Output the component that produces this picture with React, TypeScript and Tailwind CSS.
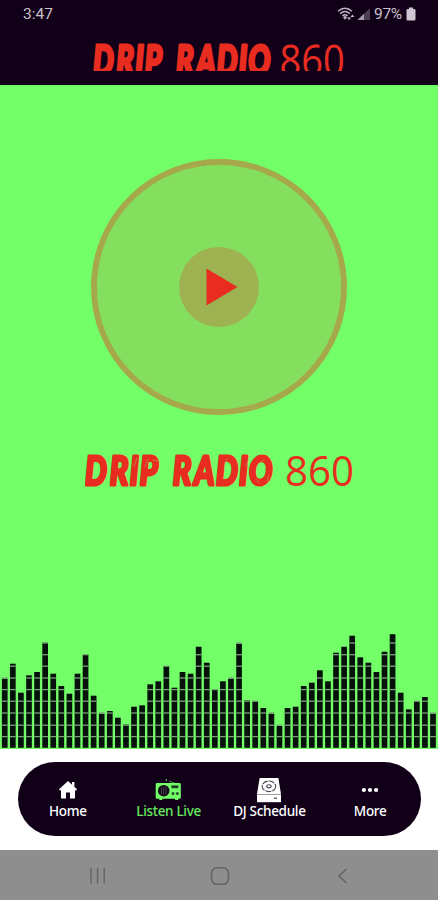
import React from "react";

const barTops = [
  678.7, 663.7, 692.7, 675.3, 672, 642.7, 673.7, 686, 693.7, 673.7, 655, 695.7, 713.7, 711, 717.7, 724.5, 706.7, 705.3,
  684.3, 681.3, 666, 687.7, 672, 673.7, 646.7, 662.7, 690, 681.3, 678.7, 643.7, 700.3, 701.3, 708, 713.7, 726, 708,
  706.7, 686, 682.7, 670.3, 681.3, 652.7, 646.7, 635.7, 657.3, 662.7, 672, 651.7, 634.2, 692.7, 709.3, 701.3, 697, 713.7,
];
const gridLines = [643, 654.7, 666.2, 678, 689.6, 701.2, 713, 725.2, 736.6];

function Wordmark({ clipped = false }: { clipped?: boolean }) {
  return (
    <svg
      viewBox={clipped ? "0 0 268 30" : "0 0 268 36"}
      className={clipped ? "block h-[28.4px] w-[253px]" : "block h-[36px] w-[268px]"}
      preserveAspectRatio="xMinYMin slice"
      fill="#e82c20"
    >
      <g transform={clipped ? "translate(0 -1.4) scale(1 1.1)" : undefined}>
        <text
          transform="translate(0 32.4) scale(0.77 1)"
          y="0"
          fontFamily="Lato, sans-serif"
          fontWeight="900"
          fontStyle="italic"
          fontSize="40"
          stroke="#e82c20"
          strokeWidth="3"
          strokeLinejoin="round"
          strokeLinecap="round"
        >
          <tspan x="0 32 58 71">DRIP</tspan> <tspan x="114 142 170 200 213">RADIO</tspan>
        </text>
        <text
          x={clipped ? "197" : "200"}
          y="33"
          fontFamily="'Open Sans', 'Noto Sans', sans-serif"
          fontWeight="400"
          fontSize="41.5"
          textLength="69"
          lengthAdjust="spacingAndGlyphs"
        >
          860
        </text>
      </g>
      {!clipped && (
        <g stroke="#8ade5f" strokeWidth="0.7" opacity="0.65" fill="none" strokeLinecap="round">
          <path d="M49 13l3-8M60 14l3-8M68 7l5 1M127 13l3-7M139 15l3-9M161 13l3-8M174 10l5-3M171 26l3 4M184 22l-2 6" />
        </g>
      )}
    </svg>
  );
}

function StatusBar() {
  return (
    <div className="flex h-[28px] items-center justify-between pr-[22px] pl-[23px] font-['Roboto',sans-serif] text-[15.5px] text-[#c9c1cc]">
      <span className="w-[31px] pt-px">3:47</span>
      <div className="flex items-center">
        <svg width="37" height="16" viewBox="0 0 37 16">
          <g fill="none" stroke="#bdb5c1" strokeWidth="1.5">
            <path d="M1 5.2Q8 -0.8 15 5.2M3.2 7.6Q8 3.5 12.8 7.6M5.4 9.9Q8 7.8 10.6 9.9" />
          </g>
          <path d="M6 11.2L8 9.8L10 11.2L8 13.8Z" fill="#bdb5c1" />
          <path d="M10 11.4L12 14L14 11.4ZM13.5 11L15.4 8.5L17.3 11Z" fill="#c9c1cc" />
          <path d="M20.5 14L33 2.2V14Z" fill="#4b4051" />
          <path d="M20.5 14L27 7.8V14Z" fill="#a69cac" />
        </svg>
        <span className="w-[32px] pt-px text-[15.5px] tracking-[-0.3px]">97%</span>
        <svg width="10" height="15" viewBox="0 0 10 15" fill="#d0c6d3">
          <path d="M3 0.5h4v1.5h1.2a1.3 1.3 0 0 1 1.3 1.3v8.9a1.3 1.3 0 0 1-1.3 1.3H1.8a1.3 1.3 0 0 1-1.3-1.3V3.3a1.3 1.3 0 0 1 1.3-1.3H3z" />
        </svg>
      </div>
    </div>
  );
}

function Equalizer() {
  return (
    <svg className="block h-[120px] w-full" viewBox="0 630 438 120" preserveAspectRatio="none">
      {barTops.map((top, i) => (
        <rect key={i} x={1.9 + i * 8.08} y={top} width="5.7" height={747.8 - top} fill="#07110c" />
      ))}
      {barTops.map((top, i) =>
        gridLines
          .filter((y) => y > top - 1)
          .map((y) => <rect key={`${i}-${y}`} x={1.9 + i * 8.08} y={y - 0.65} width="5.7" height="1.3" fill="#77a377" />)
      )}
    </svg>
  );
}

const HomeIcon = () => (
  <svg width="20" height="20" viewBox="0 0 20 20" fill="#fff">
    <path d="M10 1L19 9.3L17.9 10.8L17 10V18.5H12V12.5H8V18.5H3V10L2.1 10.8L1 9.3Z" />
    <path d="M14 2h2.4v5L14 5z" />
  </svg>
);

const RadioIcon = () => (
  <svg width="27" height="24" viewBox="0 0 27 24">
    <path d="M14 3L20 5.4" stroke="#4d9f4c" strokeWidth="0.9" />
    <circle cx="11.3" cy="2.1" r="0.8" fill="#72ff68" />
    <path d="M2 5h22.5q1.3 0 1.3 1.3v13.2q0 1.3-1.3 1.3h-1.3v1.1h-3v-1.1H7.3v1.1h-3v-1.1H2q-1.3 0-1.3-1.3V6.3Q.7 5 2 5z" fill="#72ff68" />
    <circle cx="8.7" cy="12.7" r="5.8" fill="#160a1b" />
    <path d="M6.5 9v7M8.7 8.5v8.4M10.9 9v7" stroke="#49444d" strokeWidth="0.9" />
    <path d="M16.4 7.4h7v2.8h-7z" fill="#1c3d22" />
    <circle cx="18" cy="15.6" r="1.5" fill="#235228" />
    <circle cx="22.3" cy="15.6" r="1.5" fill="#235228" />
  </svg>
);

const DriveIcon = () => (
  <svg width="26" height="26" viewBox="0 0 26 26">
    <path d="M3.6 1H22.4L25 17.3H1Z" fill="#fff" />
    <path d="M1 17.3h24v7.9H1z" fill="#fff" />
    <g fill="none" stroke="#4d4852" strokeWidth="1.1">
      <ellipse cx="12.9" cy="9.3" rx="6.8" ry="5.3" strokeDasharray="6 1" />
      <ellipse cx="12.9" cy="9.3" rx="2.2" ry="1.6" />
    </g>
    <path d="M1 17.5h24" stroke="#8d8792" strokeWidth="0.7" />
    <path d="M18 21.2h3" stroke="#4d4554" strokeWidth="1.2" />
  </svg>
);

const MoreIcon = () => (
  <svg width="18" height="8" viewBox="0 0 18 8" fill="#fff">
    <circle cx="2.9" cy="4" r="2.1" />
    <circle cx="9" cy="4" r="2.1" />
    <circle cx="15.1" cy="4" r="2.1" />
  </svg>
);

function Tab({ icon, label, active }: { icon: React.ReactNode; label: string; active?: boolean }) {
  return (
    <div className={`flex w-[101px] flex-col items-center ${active ? "text-[#67e85f]" : "text-white"}`}>
      <div className="flex h-[29px] items-center justify-center">{icon}</div>
      <span className="text-[13.5px] leading-[15px] font-medium tracking-[-0.3px] whitespace-nowrap">{label}</span>
    </div>
  );
}

export default function App() {
  return (
    <div className="flex h-[900px] w-[438px] flex-col overflow-hidden bg-white">
      <header className="h-[85px] shrink-0 bg-[#120019]">
        <StatusBar />
        <div className="flex h-[43px] items-end pl-[93px]">
          <Wordmark clipped />
        </div>
      </header>

      <main className="flex h-[664px] shrink-0 flex-col bg-[#72ff68]">
        <div className="flex justify-center pt-[74px]">
          <button className="flex size-[256px] items-center justify-center rounded-full border-[6px] border-[#a6a94b] bg-[#85df5f] bg-clip-padding">
            <span className="flex size-[80px] items-center justify-center rounded-full bg-[#9fb252]">
              <svg width="32" height="38" viewBox="0 0 32 38" className="ml-[5px]">
                <path d="M0.5 0.5L31.5 19L0.5 37.5Z" fill="#e82c20" />
              </svg>
            </span>
          </button>
        </div>
        <div className="mt-[38px] pl-[85px]">
          <Wordmark />
        </div>
        <div className="mt-auto h-[119px] overflow-hidden">
          <Equalizer />
        </div>
      </main>

      <div className="flex h-[101px] shrink-0 justify-center pt-[13px]">
        <nav className="flex h-[74px] w-[403px] rounded-full bg-[#120019] pt-[13px] font-['Noto_Sans',sans-serif]">
          <Tab icon={<HomeIcon />} label="Home" />
          <Tab icon={<RadioIcon />} label="Listen Live" active />
          <Tab icon={<DriveIcon />} label="DJ Schedule" />
          <Tab icon={<MoreIcon />} label="More" />
        </nav>
      </div>

      <footer className="flex h-[50px] shrink-0 items-center bg-[#8e8e8e] pt-[2px] pl-[89px]">
        <svg width="17" height="18" viewBox="0 0 17 18" stroke="#656565" strokeWidth="1.5">
          <path d="M2 1v15.5M8.6 1v15.5M15.2 1v15.5" />
        </svg>
        <svg width="20" height="20" viewBox="0 0 20 20" fill="none" stroke="#656565" strokeWidth="1.6" className="ml-[104px]">
          <rect x="1.5" y="1.7" width="17" height="16.6" rx="5.8" />
        </svg>
        <svg width="12" height="18" viewBox="0 0 12 18" fill="none" stroke="#656565" strokeWidth="1.7" className="ml-[106px]">
          <path d="M10.5 2L3 9L10.5 16" />
        </svg>
      </footer>
    </div>
  );
}
